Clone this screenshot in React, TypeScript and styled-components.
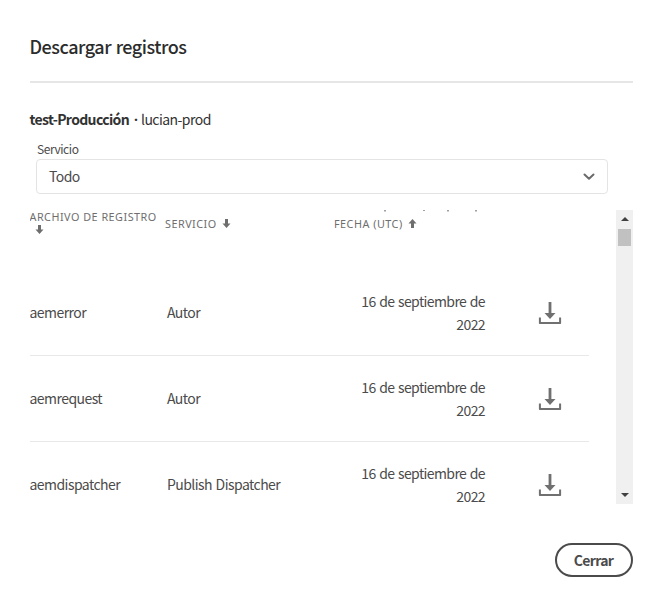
import React from "react";
import styled, { createGlobalStyle } from "styled-components";

const GlobalStyle = createGlobalStyle`
  * { box-sizing: border-box; }
  body {
    margin: 0;
    background: #fff;
    color: #4b4b4b;
    font-family: "Noto Sans CJK SC", "Noto Sans", sans-serif;
    font-size: 14px;
    letter-spacing: -0.55px;
    word-spacing: 1px;
    overflow: hidden;
  }
`;

const Dialog = styled.section`
  width: 664px;
  height: 595px;
  padding: 32px 31px 0 29.5px;
  display: flex;
  flex-direction: column;
  background: #fff;
`;

const Title = styled.h1`
  margin: 0;
  height: 51px;
  flex: none;
  border-bottom: 2px solid #e6e6e6;
  color: #2c2c2c;
  font-size: 18px;
  line-height: 29px;
  font-weight: 500;
  letter-spacing: -0.47px;
`;

const Environment = styled.p`
  margin: 25px 0 0;
  height: 22px;
  display: flex;
  line-height: 22px;
  color: #323232;
`;

const Name = styled.strong`
  font-weight: 700;
  letter-spacing: -0.65px;
`;

const Dot = styled.span`
  width: 12px;
  padding: 1px 0 0 2px;
  font-family: "Noto Sans", sans-serif;
  font-weight: 700;
  letter-spacing: 0;
  text-align: center;
`;

const Field = styled.div`
  margin: 10px 0 0 6.5px;
  width: 572px;
`;

const Label = styled.label`
  display: block;
  height: 19px;
  padding-left: 1px;
  font-size: 12px;
  line-height: 18px;
  letter-spacing: -0.45px;
`;

const Picker = styled.button`
  width: 100%;
  height: 35px;
  padding: 0 12px 1px 12px;
  display: flex;
  align-items: center;
  justify-content: space-between;
  border: 1px solid #e4e4e4;
  border-radius: 4px;
  background: #fff;
  color: #4b4b4b;
  font: inherit;
  letter-spacing: inherit;

  svg { margin-top: 1px; }
`;

const LogPanel = styled.div`
  margin-top: 16px;
  height: 294px;
  display: flex;
  justify-content: space-between;
  overflow: hidden;
`;

const Table = styled.div`
  width: 559.5px;
`;

const HeaderRow = styled.div`
  height: 60px;
  display: grid;
  grid-template-columns: 135.5px 169px 1fr;
  color: #6e6e6e;
  font-family: "Noto Sans", sans-serif;
  font-size: 10.8px;
  line-height: 14px;
  letter-spacing: 0.5px;
  word-spacing: 0;
`;

const HeaderCell = styled.div<{ $wrap?: boolean }>`
  display: flex;
  flex-direction: ${(p) => (p.$wrap ? "column" : "row")};
  align-items: flex-start;
  gap: ${(p) => (p.$wrap ? "1px" : "5px")};
  padding-top: ${(p) => (p.$wrap ? "0" : "7px")};
  white-space: nowrap;

  svg {
    flex: none;
    margin-left: ${(p) => (p.$wrap ? "5.5px" : "0")};
    margin-top: ${(p) => (p.$wrap ? "0" : "2px")};
  }
`;

const DateHeader = styled(HeaderCell)`
  position: relative;
`;

const Overflow = styled.svg`
  && {
    position: absolute;
    left: 50px;
    top: 0;
    margin: 0;
  }
`;

const Row = styled.div`
  height: 86px;
  display: grid;
  grid-template-columns: 137.5px 168px 150px 1fr;
  align-items: center;
  border-bottom: 1px solid #e8e8e8;
`;

const Cell = styled.div`
  padding-bottom: 1px;
  white-space: nowrap;
`;

const DateCell = styled.div`
  padding: 1px 0 0 20px;
  text-align: right;
  line-height: 23px;
  letter-spacing: -0.6px;
`;

const DownloadButton = styled.button`
  margin-left: 53px;
  width: 24px;
  height: 24px;
  padding: 0;
  border: 0;
  background: none;
  display: flex;
`;

const Scrollbar = styled.div`
  width: 17px;
  height: 294px;
  padding: 7px 0;
  display: flex;
  flex-direction: column;
  align-items: center;
  background: #f0f0f0;
`;

const Thumb = styled.div`
  width: 13px;
  height: 17px;
  margin: 8px 0 auto;
  background: #c1c1c1;
`;

const Footer = styled.footer`
  margin-top: 39px;
  display: flex;
  justify-content: flex-end;
`;

const CloseButton = styled.button`
  width: 78px;
  height: 34px;
  padding: 0 1px 1px 0;
  border: 2px solid #4b4b4b;
  border-radius: 17px;
  background: #fff;
  color: #4b4b4b;
  font: inherit;
  font-weight: 700;
  letter-spacing: -0.7px;
`;

const SortArrow = ({ up = false }: { up?: boolean }) => (
  <svg width="9" height="10" viewBox="0 0 9 10" fill="#6e6e6e">
    <path d={up ? "M4.5 0 8.5 4.5H6V9H3V4.5H.5Z" : "M3 0H6V4.5H8.5L4.5 9 .5 4.5H3Z"} />
  </svg>
);

const DownloadIcon = () => (
  <svg width="24" height="24" viewBox="0 0 24 24" fill="#707070">
    <path d="M10.6 1H13.4V12H17.5L12 18 6.5 12H10.6Z" />
    <path d="M.9 16.5H2.9V21H21.1V16.5H23.1V22.2Q23.1 23 22.3 23H1.7Q.9 23 .9 22.2Z" />
  </svg>
);

const ScrollArrow = ({ up = false }: { up?: boolean }) => (
  <svg width="8" height="4" viewBox="0 0 8 4" fill="#404040">
    <path d={up ? "M4 0 8 4H0Z" : "M0 0H8L4 4Z"} />
  </svg>
);

const logs = [
  { file: "aemerror", service: "Autor" },
  { file: "aemrequest", service: "Autor" },
  { file: "aemdispatcher", service: "Publish Dispatcher" },
];

export default function App() {
  return (
    <>
      <GlobalStyle />
      <Dialog>
        <Title>Descargar registros</Title>
        <Environment>
          <Name>test-Producción</Name>
          <Dot>·</Dot>
          <span>lucian-prod</span>
        </Environment>
        <Field>
          <Label>Servicio</Label>
          <Picker>
            Todo
            <svg width="12" height="8" viewBox="0 0 12 8" fill="none" stroke="#6a6a6a" strokeWidth="2" strokeLinecap="round" strokeLinejoin="round">
              <path d="M1.5 1.5 6 5.7 10.5 1.5" />
            </svg>
          </Picker>
        </Field>
        <LogPanel>
          <Table>
            <HeaderRow>
              <HeaderCell $wrap>
                ARCHIVO DE REGISTRO
                <SortArrow />
              </HeaderCell>
              <HeaderCell>
                SERVICIO
                <SortArrow />
              </HeaderCell>
              <DateHeader>
                FECHA (UTC)
                <SortArrow up />
                <Overflow width="96" height="2" viewBox="0 0 96 2" fill="#a0a0a8">
                  <path d="M0 0H2V1.5H0ZM39 0H41V1H39ZM63 0H65V1.5H63ZM91 0H93V1.5H91Z" />
                </Overflow>
              </DateHeader>
            </HeaderRow>
            {logs.map((log) => (
              <Row key={log.file}>
                <Cell>{log.file}</Cell>
                <Cell>{log.service}</Cell>
                <DateCell>16 de septiembre de 2022</DateCell>
                <DownloadButton aria-label="Descargar">
                  <DownloadIcon />
                </DownloadButton>
              </Row>
            ))}
          </Table>
          <Scrollbar>
            <ScrollArrow up />
            <Thumb />
            <ScrollArrow />
          </Scrollbar>
        </LogPanel>
        <Footer>
          <CloseButton>Cerrar</CloseButton>
        </Footer>
      </Dialog>
    </>
  );
}
